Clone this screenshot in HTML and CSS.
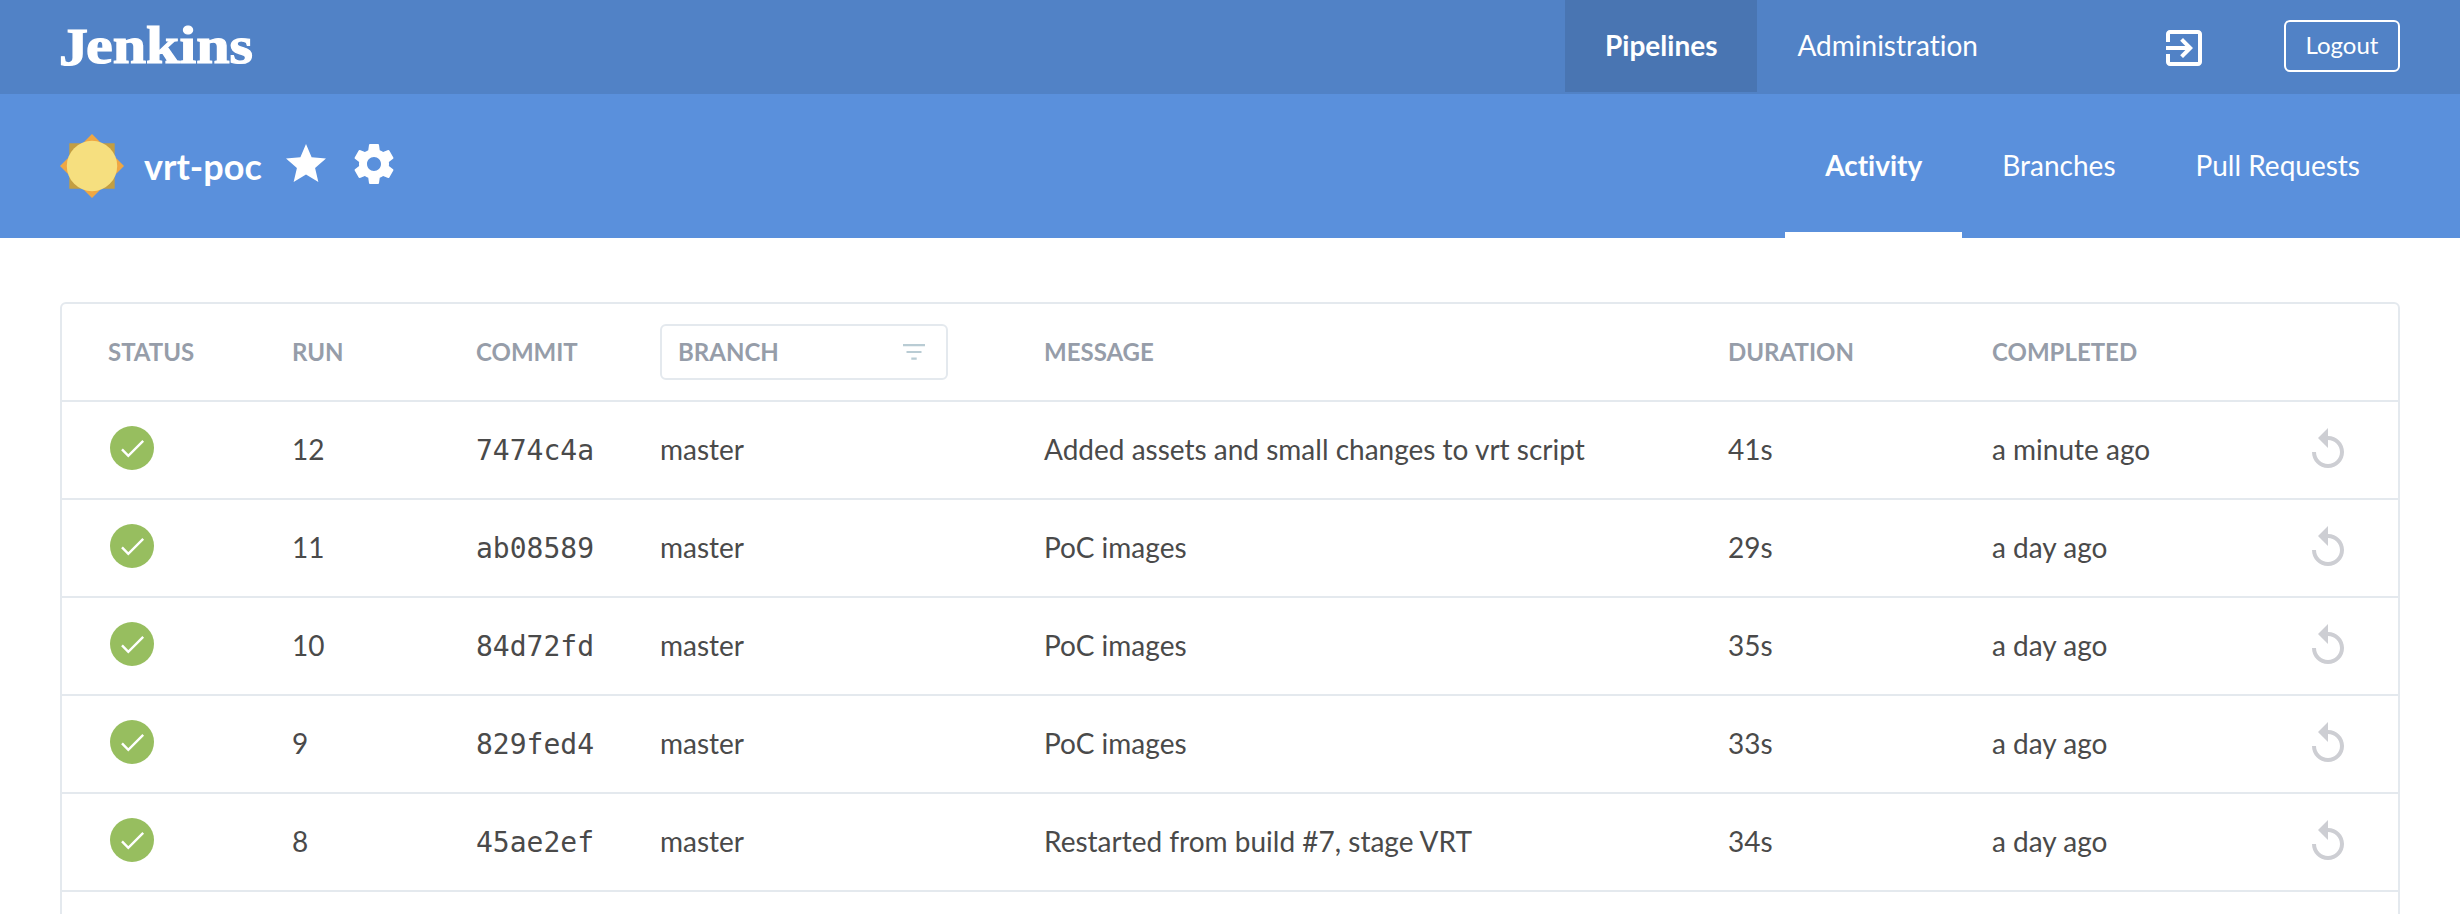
FILE: index.html
```html
<!DOCTYPE html>
<html lang="en">
<head>
<meta charset="utf-8">
<title>Jenkins - vrt-poc</title>
<link rel="stylesheet" href="styles.css">
</head>
<body>
<svg class="sprite" aria-hidden="true">
  <symbol id="ok" viewBox="0 0 44 44"><circle cx="22" cy="22" r="22" fill="#97be5f"/><path d="M12 23.3l6.3 6.6L33.2 14.8" fill="none" stroke="#fff" stroke-width="2.4"/></symbol>
  <symbol id="replay" viewBox="0 0 24 24"><path d="M12 5V1L7 6l5 5V7c3.31 0 6 2.69 6 6s-2.69 6-6 6-6-2.69-6-6H4c0 4.42 3.58 8 8 8s8-3.58 8-8-3.58-8-8-8z"/></symbol>
</svg>
<header class="topbar">
  <svg class="logo" width="196" height="60" role="img" aria-label="Jenkins"><text class="logo-text" y="45"><tspan x="1" dy="1.500" textLength="29" lengthAdjust="spacingAndGlyphs">J</tspan><tspan x="28" dy="-1.500" textLength="167" lengthAdjust="spacingAndGlyphs">enkins</tspan></text></svg>
  <nav class="topnav">
    <a class="toplink active">Pipelines</a>
    <a class="toplink">Administration</a>
  </nav>
  <svg class="exit" viewBox="0 0 24 24"><path d="M10.09 15.59L11.5 17l5-5-5-5-1.41 1.41L12.67 11H3v2h9.67l-2.58 2.59zM19 3H5c-1.11 0-2 .9-2 2v4h2V5h14v14H5v-4H3v4c0 1.1.89 2 2 2h14c1.1 0 2-.9 2-2V5c0-1.100-.9-2-2-2z"/></svg>
  <a class="logout">Logout</a>
</header>
<section class="subbar">
  <svg class="sun" viewBox="0 0 64 64"><path fill="#c39e42" d="M9.300 9.300h45.400v45.400H9.300z"/><path fill="#efa743" d="M32 0l32 32-32 32L0 32z"/><circle cx="32" cy="32" r="25.200" fill="#f6df7f"/></svg>
  <h1 class="title">vrt-poc</h1>
  <svg class="star" viewBox="0 0 24 24"><path d="M12 17.27L18.18 21l-1.640-7.030L22 9.240l-7.190-.61L12 2 9.190 8.630 2 9.240l5.460 4.730L5.820 21z"/></svg>
  <svg class="gear" viewBox="0 0 24 24"><path d="M19.430 12.980c.04-.32.07-.64.07-.98s-.03-.66-.07-.98l2.110-1.650c.19-.15.24-.42.12-.64l-2-3.460c-.12-.22-.39-.3-.61-.22l-2.490 1c-.52-.4-1.080-.73-1.690-.98l-.38-2.650C14.460 2.180 14.250 2 14 2h-4c-.25 0-.46.18-.49.42l-.38 2.650c-.61.25-1.170.59-1.690.98l-2.490-1c-.23-.09-.49 0-.61.22l-2 3.460c-.13.22-.07.49.12.64l2.110 1.650c-.04.32-.07.65-.07.98s.03.66.07.98l-2.110 1.650c-.19.15-.24.42-.12.64l2 3.460c.12.22.39.3.61.22l2.490-1c.52.4 1.080.73 1.690.98l.38 2.650c.03.24.24.42.49.42h4c.25 0 .46-.18.49-.42l.38-2.650c.61-.25 1.170-.59 1.690-.98l2.490 1c.23.09.49 0 .61-.22l2-3.460c.12-.22.07-.49-.12-.64l-2.110-1.650zM12 15.500c-1.930 0-3.500-1.570-3.500-3.500s1.570-3.500 3.500-3.500 3.500 1.570 3.500 3.500-1.570 3.500-3.500 3.500z"/></svg>
  <nav class="tabs">
    <a class="tab active">Activity</a>
    <a class="tab">Branches</a>
    <a class="tab">Pull Requests</a>
  </nav>
</section>
<main class="runs">
  <div class="row head">
    <span>STATUS</span><span>RUN</span><span>COMMIT</span>
    <div class="filter"><span>BRANCH</span><svg class="funnel" viewBox="0 0 22 16"><path d="M0 0h22v2.200H0zM3.500 6.900h15v2.200h-15zM8.300 13.600h5.400v2.200H8.300z"/></svg></div>
    <span>MESSAGE</span><span>DURATION</span><span>COMPLETED</span>
  </div>
  <div class="row"><svg class="status"><use href="#ok"/></svg><span>12</span><span class="hash">7474c4a</span><span>master</span><span>Added assets and small changes to vrt script</span><span>41s</span><span>a minute ago</span><svg class="replay"><use href="#replay"/></svg></div>
  <div class="row"><svg class="status"><use href="#ok"/></svg><span>11</span><span class="hash">ab08589</span><span>master</span><span>PoC images</span><span>29s</span><span>a day ago</span><svg class="replay"><use href="#replay"/></svg></div>
  <div class="row"><svg class="status"><use href="#ok"/></svg><span>10</span><span class="hash">84d72fd</span><span>master</span><span>PoC images</span><span>35s</span><span>a day ago</span><svg class="replay"><use href="#replay"/></svg></div>
  <div class="row"><svg class="status"><use href="#ok"/></svg><span>9</span><span class="hash">829fed4</span><span>master</span><span>PoC images</span><span>33s</span><span>a day ago</span><svg class="replay"><use href="#replay"/></svg></div>
  <div class="row"><svg class="status"><use href="#ok"/></svg><span>8</span><span class="hash">45ae2ef</span><span>master</span><span>Restarted from build #7, stage VRT</span><span>34s</span><span>a day ago</span><svg class="replay"><use href="#replay"/></svg></div>
</main>
</body>
</html>
```

FILE: styles.css
```css
* { box-sizing: border-box; }
html, body { height: 100%; }
body {
  margin: 0;
  height: 914px;
  overflow: hidden;
  display: flex;
  flex-direction: column;
  background: #fff;
  color: #4a4a4a;
  font-family: Lato, sans-serif;
  font-size: 28px;
  font-variant-ligatures: none;
}
svg { flex: none; display: block; }
.sprite { display: none; }

.topbar {
  height: 94px;
  flex: none;
  display: flex;
  align-items: flex-start;
  padding: 0 60px 0 58px;
  background: #5182c6;
  color: #fff;
  fill: #fff;
}
.logo { margin-top: 18px; }
.logo-text {
  font: bold 52px "Liberation Serif", serif;
  stroke: #fff;
  stroke-width: 1.2px;
}
.topnav { display: flex; margin-left: auto; }
.toplink {
  height: 92px;
  padding: 0 40px;
  line-height: 90px;
}
.toplink.active { background: #4975b2; font-weight: bold; }
.exit { width: 48px; height: 48px; margin: 24px 76px 0 142px; }
.logout {
  width: 116px;
  height: 52px;
  margin-top: 20px;
  border: 2px solid #fff;
  border-radius: 6px;
  font-size: 24px;
  line-height: 46px;
  text-align: center;
}

.subbar {
  height: 144px;
  flex: none;
  display: flex;
  align-items: flex-start;
  padding: 0 60px;
  background: #5a90dc;
  color: #fff;
  fill: #fff;
}
.sun { width: 64px; height: 64px; margin-top: 40px; }
.title { margin: 0 0 0 20px; width: 138px; font-size: 36px; line-height: 144px; font-weight: bold; white-space: nowrap; }
.star, .gear { width: 48px; height: 48px; margin-top: 46px; }
.gear { margin-left: 20px; }
.tabs { display: flex; margin-left: auto; }
.tab { height: 144px; padding: 0 40px; line-height: 142px; }
.tab.active { font-weight: bold; border-bottom: 6px solid #fff; }

.runs {
  flex: none;
  height: 640px;
  margin: 64px 60px 0;
  border: 2px solid #e4e9ee;
  border-radius: 6px;
}
.row {
  height: 98px;
  display: grid;
  grid-template-columns: 184px 184px 184px 384px 684px 264px 1fr 48px;
  align-items: center;
  padding: 0 46px;
  border-bottom: 2px solid #e4e9ee;
  white-space: nowrap;
}
.row span { padding-bottom: 2px; }
.head { color: #969da9; font-size: 24px; font-weight: bold; }
.row .hash { padding: 0; font-family: "DejaVu Sans Mono", monospace; font-size: 28px; }
.status { width: 44px; height: 44px; margin: -4px 0 0 2px; }
.replay { width: 48px; height: 48px; fill: #cdced3; }
.filter {
  width: 288px;
  height: 56px;
  display: flex;
  align-items: center;
  justify-content: space-between;
  padding: 0 21px 0 16px;
  border: 2px solid #e4e9ee;
  border-radius: 6px;
}
.funnel { width: 22px; height: 16px; fill: #b9ccd4; }
```
